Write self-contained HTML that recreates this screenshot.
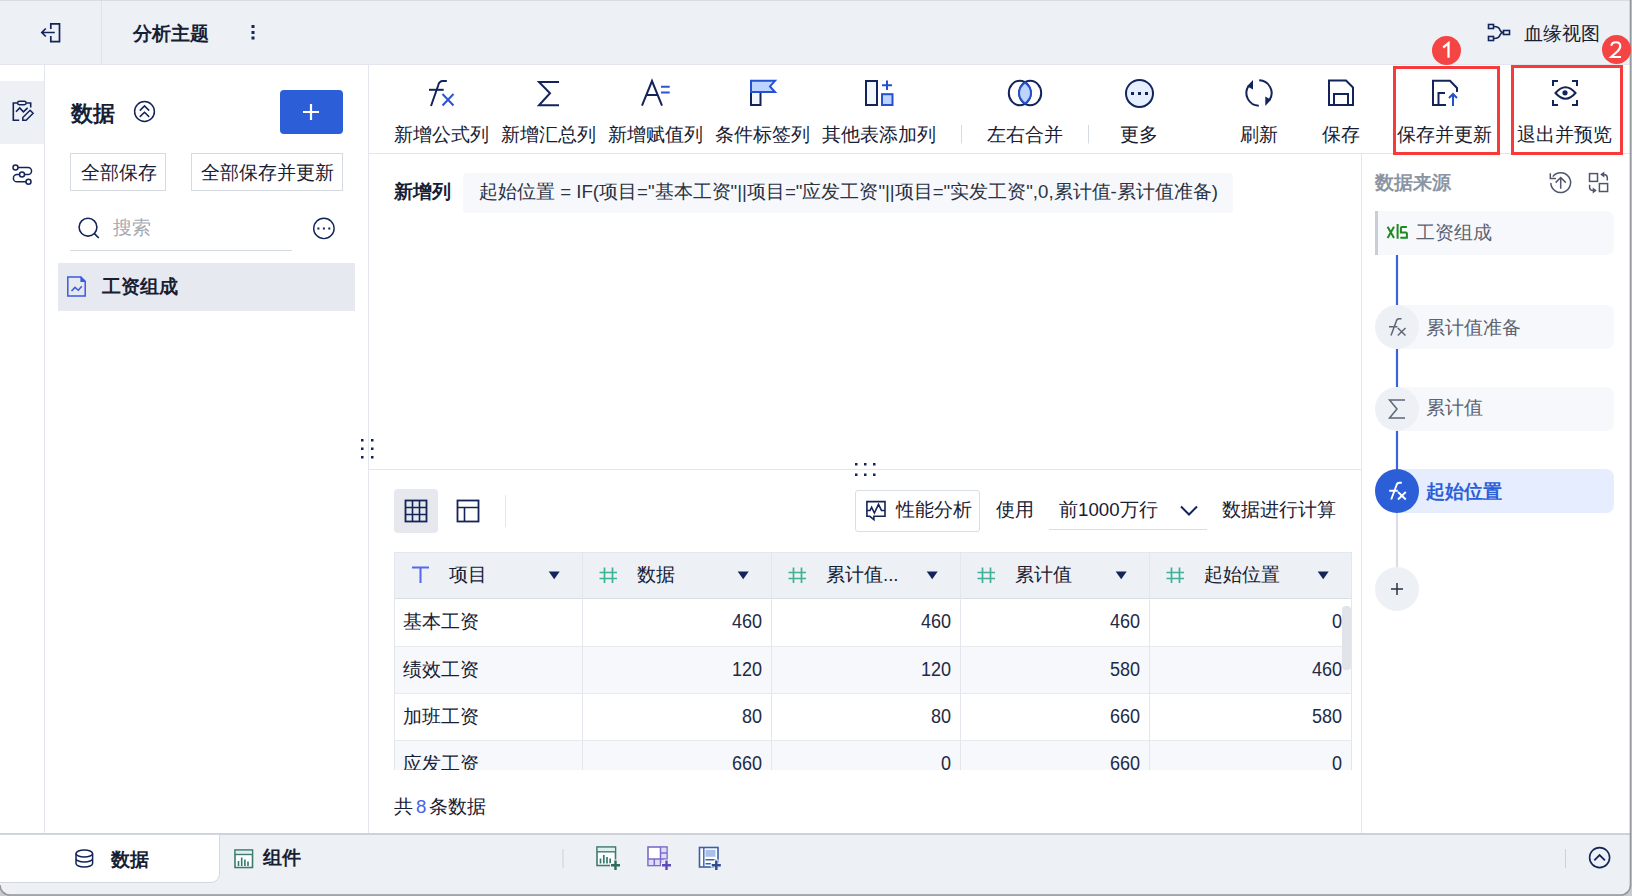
<!DOCTYPE html>
<html><head><meta charset="utf-8">
<style>
*{box-sizing:border-box;margin:0;padding:0}
html,body{width:1632px;height:896px;overflow:hidden;background:#fff}
body{position:relative;font-family:"Liberation Sans",sans-serif;font-size:18.67px;line-height:24px;color:#172033}
.a{position:absolute}
.t{position:absolute;white-space:nowrap;line-height:24px}
.b{font-weight:bold}
svg{position:absolute;overflow:visible}
.n{text-align:right;font-size:20px;transform:scaleX(.9);transform-origin:100% 50%;color:#1E2B45}
</style></head><body>

<!-- top bar -->
<div class="a" style="left:0;top:0;width:1632px;height:65px;background:#EDF0F5;border-top:1px solid #D9DCE1;border-bottom:1px solid #E3E6EC"></div>
<div class="a" style="left:101px;top:1px;width:1px;height:63px;background:#E0E3E9"></div>
<svg style="left:0;top:0" width="1632" height="65">
  <g fill="none" stroke="#12245A" stroke-width="2">
    <path d="M50.8 29 V23.8 H59.5 V41.6 H50.8 V36" stroke-width="1.7"/>
    <path d="M54.8 32.5 H41.8 M45.8 28.5 L41.8 32.5 L45.8 36.5" stroke-width="1.7"/>
  </g>
  <g fill="#12245A"><rect x="251.5" y="25" width="3" height="3"/><rect x="251.5" y="31" width="3" height="3"/><rect x="251.5" y="36.5" width="3" height="3"/></g>
  <g fill="none" stroke="#12245A" stroke-width="1.6">
    <rect x="1488.5" y="24.5" width="5" height="4"/><rect x="1488.5" y="36.5" width="5" height="4"/><rect x="1503.5" y="30.5" width="6" height="4"/>
    <path d="M1494 26.5 Q1499 26.5 1500 30 Q1501 32.5 1503.5 32.5 M1494 38.5 Q1499 38.5 1500 35 Q1501 32.5 1503.5 32.5"/>
  </g>
</svg>
<div class="t b" style="left:133px;top:22px">分析主题</div>
<div class="t" style="left:1524px;top:22px">血缘视图</div>

<!-- left rail -->
<div class="a" style="left:0;top:65px;width:45px;height:768px;background:#fff;border-right:1px solid #E3E6EC"></div>
<div class="a" style="left:0;top:81px;width:44px;height:63px;background:#EDF0F5"></div>
<svg style="left:0;top:0" width="45" height="200">
  <g fill="none" stroke="#12245A" stroke-width="1.8">
    <path d="M17.4 103 H13.3 V120.3 H19.2" stroke-width="1.6"/><path d="M26.2 103 H30.7 V107.5" stroke-width="1.6"/>
    <rect x="17.6" y="101.3" width="8.5" height="3.4" rx="1.7" stroke-width="1.5"/>
    <path d="M16 111.7 L19.7 108 L23.4 111.9 L27.7 107.8" stroke-width="1.6"/>
    <path d="M22.8 120.3 V117.5 L30.1 110.3 L33.1 113.3 L26.1 120.3 Z" stroke-width="1.5"/>
    <circle cx="15.5" cy="167.5" r="2.5" stroke-width="1.5"/><circle cx="22" cy="174.6" r="2.5" stroke-width="1.5"/><circle cx="28.5" cy="181.8" r="2.5" stroke-width="1.5"/>
    <path d="M18 167.5 H28 A3.55 3.55 0 0 1 28 174.6 H24.5 M19.5 174.6 H17 A3.6 3.6 0 0 0 17 181.8 H26" stroke-width="1.5"/>
  </g>
</svg>

<!-- left panel -->
<div class="a" style="left:368px;top:65px;width:1px;height:768px;background:#E3E6EC"></div>
<div class="t b" style="left:70.5px;top:100px;font-size:21.8px;line-height:28px">数据</div>
<svg style="left:0;top:0" width="370" height="330">
  <g fill="none" stroke="#12245A" stroke-width="1.6">
    <circle cx="144.5" cy="111.5" r="9.9" stroke-width="1.5"/>
    <path d="M139.8 110.6 L144.5 105.9 L149.2 110.6 M139.8 116.9 L144.5 112.2 L149.2 116.9" stroke-width="1.5"/>
  </g>
  <g fill="none" stroke="#12245A" stroke-width="2">
    <circle cx="88" cy="227.2" r="8.9" stroke-width="1.6"/><path d="M94.4 233.6 L98.8 238" stroke-width="1.7"/>
  </g>
  <g fill="none" stroke="#12245A" stroke-width="1.6">
    <circle cx="323.9" cy="228.4" r="10.2" stroke-width="1.4"/>
  </g>
  <g fill="#12245A"><rect x="317.4" y="227.5" width="2" height="2"/><rect x="322.9" y="227.5" width="2" height="2"/><rect x="328.3" y="227.5" width="2" height="2"/></g>
</svg>
<div class="a" style="left:280px;top:90px;width:63px;height:44px;background:#2C5ED8;border-radius:4px"></div>
<svg style="left:0;top:0" width="370" height="140"><path d="M311 104 V120 M303 112 H319" stroke="#fff" stroke-width="2.2"/></svg>
<div class="a" style="left:70px;top:153px;width:96px;height:38px;border:1px solid #D6DAE1"></div>
<div class="t" style="left:81px;top:161px">全部保存</div>
<div class="a" style="left:191px;top:153px;width:152px;height:38px;border:1px solid #D6DAE1"></div>
<div class="t" style="left:201px;top:161px">全部保存并更新</div>
<div class="t" style="left:113px;top:216px;color:#A4A9B2">搜索</div>
<div class="a" style="left:70px;top:250px;width:222px;height:1px;background:#D6DAE1"></div>
<div class="a" style="left:58px;top:263px;width:297px;height:48px;background:#E6E9F0"></div>
<svg style="left:0;top:0" width="370" height="330">
  <path d="M67.8 277.1 H80.9 L85.2 281.4 V295.9 H67.8 Z" fill="none" stroke="#3A5AE2" stroke-width="1.5"/>
  <path d="M80.4 276.4 L86 282 H80.4 Z" fill="#3A5AE2"/>
  <path d="M71.5 291 L75 287.4 L78.3 290.3 L81.8 286.3" fill="none" stroke="#3A5AE2" stroke-width="1.5"/>
</svg>
<div class="t b" style="left:102px;top:275px">工资组成</div>


<!-- center toolbar -->
<div class="a" style="left:369px;top:153px;width:1262px;height:1px;background:#E3E6EC"></div>
<div class="a" style="left:1361px;top:153px;width:1px;height:680px;background:#E3E6EC"></div>
<svg style="left:0;top:0" width="1632" height="160">
  <!-- fx -->
  <path d="M446.8 81 H443 Q439 81 438 86 L431 106" fill="none" stroke="#12245A" stroke-width="2"/>
  <path d="M429 89.8 H443.7" fill="none" stroke="#12245A" stroke-width="2"/>
  <path d="M442.5 94 L453.5 105.5 M453.5 94 L442.5 105.5" fill="none" stroke="#2C55D0" stroke-width="2"/>
  <!-- sigma -->
  <path d="M559 81.9 H539 L550 93.3 L539 105.3 H559" fill="none" stroke="#12245A" stroke-width="2"/>
  <!-- A= -->
  <path d="M642 105.6 L652 81 L662 105.6 M646 95 H658" fill="none" stroke="#12245A" stroke-width="2"/>
  <path d="M661 86.7 H669.7 M661 92.6 H669.7" fill="none" stroke="#2C55D0" stroke-width="2"/>
  <!-- flag -->
  <rect x="751" y="92" width="9.5" height="13" fill="#F3F7FF" stroke="#12245A" stroke-width="2"/>
  <path d="M751 80.8 H775 L770 86.4 L775 92 H751 Z" fill="#BCD4FF" stroke="#2550D0" stroke-width="2"/>
  <!-- col add -->
  <rect x="866" y="81" width="11" height="24" fill="#F3F8FF" stroke="#12245A" stroke-width="2"/>
  <rect x="882" y="94.2" width="10.5" height="10.8" fill="#BCD4FF" stroke="#2550D0" stroke-width="2"/>
  <path d="M887 80.5 V90 M882 85.2 H892" fill="none" stroke="#2550D0" stroke-width="2"/>
  <!-- merge -->
  <ellipse cx="1019.8" cy="93" rx="11" ry="12.3" fill="none" stroke="#12245A" stroke-width="2"/>
  <ellipse cx="1030.2" cy="93" rx="11" ry="12.3" fill="none" stroke="#12245A" stroke-width="2"/>
  <path d="M1025 82.5 Q1031 87 1031 93 Q1031 99 1025 103.5 Q1019 99 1019 93 Q1019 87 1025 82.5 Z" fill="#BCD4FF" stroke="#2550D0" stroke-width="2"/>
  <!-- more -->
  <circle cx="1139.5" cy="93.4" r="13.5" fill="#E6EFFF" stroke="#12245A" stroke-width="2"/>
  <g fill="#12245A"><rect x="1131" y="92" width="3" height="3"/><rect x="1138" y="92" width="3" height="3"/><rect x="1145" y="92" width="3" height="3"/></g>
  <!-- refresh -->
  <path d="M1258.8 105.7 A12.7 12.7 0 0 1 1248.5 86" fill="none" stroke="#12245A" stroke-width="2"/>
  <path d="M1259.2 80.3 A12.7 12.7 0 0 1 1269.5 100" fill="none" stroke="#12245A" stroke-width="2"/>
  <path d="M1253 80 L1253 89.5 L1247 86.2 Z" fill="#12245A"/>
  <path d="M1265.3 96.5 L1265.3 106 L1271 99.8 Z" fill="#12245A"/>
  <!-- save -->
  <path d="M1329 80.5 H1346 L1353 87.5 V105 H1329 Z" fill="none" stroke="#12245A" stroke-width="2"/>
  <path d="M1334 105 V94 H1348 V105" fill="none" stroke="#12245A" stroke-width="2"/>
  <!-- save update -->
  <path d="M1446 105 H1433 V80.8 H1450 L1457 88 V92" fill="none" stroke="#12245A" stroke-width="2"/>
  <path d="M1438.5 105 V93 H1445" fill="none" stroke="#12245A" stroke-width="2"/>
  <path d="M1453 106 V94 M1449 98 L1453 94 L1457 98" fill="none" stroke="#2550D0" stroke-width="2"/>
  <!-- eye -->
  <path d="M1553 86 V81 H1558 M1572 81 H1577 V86 M1577 100 V105 H1572 M1558 105 H1553 V100" fill="none" stroke="#12245A" stroke-width="2"/>
  <path d="M1555.5 93 Q1565.5 81.5 1575.5 93 Q1565.5 104.5 1555.5 93 Z" fill="none" stroke="#12245A" stroke-width="2"/>
  <circle cx="1565" cy="92.8" r="2.6" fill="#12245A"/>
  <!-- separators -->
  <path d="M961.5 125 V143.5 M1088.5 125 V143.5" stroke="#D6DAE1" stroke-width="1"/>
</svg>
<div class="t" style="left:394px;top:123px">新增公式列</div>
<div class="t" style="left:501px;top:123px">新增汇总列</div>
<div class="t" style="left:608px;top:123px">新增赋值列</div>
<div class="t" style="left:715px;top:123px">条件标签列</div>
<div class="t" style="left:822px;top:123px">其他表添加列</div>
<div class="t" style="left:987px;top:123px">左右合并</div>
<div class="t" style="left:1120px;top:123px">更多</div>
<div class="t" style="left:1240px;top:123px">刷新</div>
<div class="t" style="left:1322px;top:123px">保存</div>
<div class="t" style="left:1397px;top:123px">保存并更新</div>
<div class="t" style="left:1517px;top:123px">退出并预览</div>
<!-- red boxes -->
<div class="a" style="left:1393px;top:66px;width:107px;height:89px;border:3px solid #F83A3A"></div>
<div class="a" style="left:1511px;top:65px;width:112px;height:90px;border:3px solid #F83A3A"></div>
<div class="a" style="left:1432px;top:36px;width:29px;height:29px;border-radius:50%;background:#F44444"></div>
<svg style="left:0;top:0" width="1632" height="70"><path d="M1443.2 47.5 L1448.5 43.2 V57.8" fill="none" stroke="#fff" stroke-width="2.3"/></svg>


<!-- formula -->
<div class="t b" style="left:394px;top:180px">新增列</div>
<div class="a" style="left:463px;top:173px;width:770px;height:40px;background:#F7F8FB;border-radius:4px"></div>
<div class="t" style="left:479px;top:180px;color:#2A3243">起始位置 = IF(项目="基本工资"||项目="应发工资"||项目="实发工资",0,累计值-累计值准备)</div>

<!-- handles -->
<svg style="left:0;top:0" width="1632" height="500">
  <g fill="#12245A">
    <rect x="361" y="439" width="2.5" height="2.5"/><rect x="371" y="439" width="2.5" height="2.5"/>
    <rect x="361" y="447.5" width="2.5" height="2.5"/><rect x="371" y="447.5" width="2.5" height="2.5"/>
    <rect x="361" y="456" width="2.5" height="2.5"/><rect x="371" y="456" width="2.5" height="2.5"/>
    <rect x="855" y="463" width="2.5" height="2.5"/><rect x="864" y="463" width="2.5" height="2.5"/><rect x="873" y="463" width="2.5" height="2.5"/>
    <rect x="855" y="473.5" width="2.5" height="2.5"/><rect x="864" y="473.5" width="2.5" height="2.5"/><rect x="873" y="473.5" width="2.5" height="2.5"/>
  </g>
</svg>
<div class="a" style="left:369px;top:469px;width:992px;height:1px;background:#E3E6EC"></div>


<!-- table toolbar -->
<div class="a" style="left:394px;top:489px;width:44px;height:44px;background:#E6E8EE;border-radius:4px"></div>
<svg style="left:0;top:0" width="1632" height="560">
  <rect x="405.5" y="500.5" width="21" height="21" fill="#E6E8EE" stroke="#12245A" stroke-width="1.8"/>
  <path d="M412.5 500.5 V521.5 M419.5 500.5 V521.5 M405.5 507.5 H426.5 M405.5 514.5 H426.5" stroke="#12245A" stroke-width="1.6" fill="none"/>
  <rect x="457.5" y="500.5" width="21" height="21" fill="none" stroke="#12245A" stroke-width="1.8"/>
  <path d="M457.5 507.5 H478.5 M464.5 507.5 V521.5" stroke="#12245A" stroke-width="1.6" fill="none"/>
  <path d="M505.5 495 V527" stroke="#E3E6EC" stroke-width="1"/>
  <path d="M866.9 501.6 H885 V516.3 H873.9 V519.6 L869.8 516.3 H866.9 Z" fill="none" stroke="#12245A" stroke-width="1.6"/>
  <path d="M866.9 510.5 H870 L871.6 507.3 L874.4 513 L878.5 504.3 L881.5 510.5 H885" fill="none" stroke="#12245A" stroke-width="1.6"/>
  <path d="M1181 506.5 L1189 514.5 L1197 506.5" fill="none" stroke="#12245A" stroke-width="2"/>
</svg>
<div class="a" style="left:855px;top:490px;width:125px;height:42px;border:1px solid #D9DDE4;border-radius:3px"></div>
<div class="t" style="left:896px;top:498px">性能分析</div>
<div class="t" style="left:996px;top:498px">使用</div>
<div class="t" style="left:1059px;top:498px">前1000万行</div>
<div class="a" style="left:1049px;top:529px;width:158px;height:1px;background:#D9DDE4"></div>
<div class="t" style="left:1222px;top:498px">数据进行计算</div>

<!-- table -->
<div class="a" style="left:394px;top:552px;width:958px;height:218px;overflow:hidden">
<div class="a" style="left:0;top:0;width:957px;height:47px;background:#EDF0F5;border-top:1px solid #E3E6EC;border-bottom:1px solid #D9DDE4"></div>
<div class="a" style="left:0;top:47px;width:957px;height:48px;background:#FFFFFF;border-bottom:1px solid #E6E9EE"></div>
<div class="a" style="left:0;top:95px;width:957px;height:47px;background:#F7F8FB;border-bottom:1px solid #E6E9EE"></div>
<div class="a" style="left:0;top:142px;width:957px;height:47px;background:#FFFFFF;border-bottom:1px solid #E6E9EE"></div>
<div class="a" style="left:0;top:189px;width:957px;height:47px;background:#F7F8FB;border-bottom:1px solid #E6E9EE"></div>
<div class="a" style="left:188px;top:0;width:1px;height:218px;background:#E3E6EC"></div>
<div class="a" style="left:377px;top:0;width:1px;height:218px;background:#E3E6EC"></div>
<div class="a" style="left:566px;top:0;width:1px;height:218px;background:#E3E6EC"></div>
<div class="a" style="left:755px;top:0;width:1px;height:218px;background:#E3E6EC"></div>
<div class="a" style="left:0;top:0;width:1px;height:218px;background:#E3E6EC"></div>
<div class="a" style="left:957px;top:0;width:1px;height:218px;background:#E3E6EC"></div>
<svg style="left:0;top:0" width="957" height="50">
<path d="M18 15.5 H35 M26.5 15.5 V31" stroke="#5468E8" stroke-width="2" fill="none"/>
<path d="M154.7 19.5 H165.7 L160.2 27.3 Z" fill="#12245A"/>
<path d="M210.5 15.5 V31 M218.5 15.5 V31 M205.5 20.5 H223 M205.5 26.5 H223" stroke="#41B097" stroke-width="1.7" fill="none"/>
<path d="M343.7 19.5 H354.7 L349.2 27.3 Z" fill="#12245A"/>
<path d="M399.5 15.5 V31 M407.5 15.5 V31 M394.5 20.5 H412 M394.5 26.5 H412" stroke="#41B097" stroke-width="1.7" fill="none"/>
<path d="M532.7 19.5 H543.7 L538.2 27.3 Z" fill="#12245A"/>
<path d="M588.5 15.5 V31 M596.5 15.5 V31 M583.5 20.5 H601 M583.5 26.5 H601" stroke="#41B097" stroke-width="1.7" fill="none"/>
<path d="M721.7 19.5 H732.7 L727.2 27.3 Z" fill="#12245A"/>
<path d="M777.5 15.5 V31 M785.5 15.5 V31 M772.5 20.5 H790 M772.5 26.5 H790" stroke="#41B097" stroke-width="1.7" fill="none"/>
<path d="M923.7 19.5 H934.7 L929.2 27.3 Z" fill="#12245A"/>
</svg>
<div class="t" style="left:55px;top:11px">项目</div>
<div class="t" style="left:243px;top:11px">数据</div>
<div class="t" style="left:432px;top:11px">累计值...</div>
<div class="t" style="left:621px;top:11px">累计值</div>
<div class="t" style="left:810px;top:11px">起始位置</div>
<div class="t" style="left:9px;top:58px">基本工资</div>
<div class="t n" style="left:188px;top:57px;width:180px">460</div>
<div class="t n" style="left:377px;top:57px;width:180px">460</div>
<div class="t n" style="left:566px;top:57px;width:180px">460</div>
<div class="t n" style="left:755px;top:57px;width:193px">0</div>
<div class="t" style="left:9px;top:106px">绩效工资</div>
<div class="t n" style="left:188px;top:105px;width:180px">120</div>
<div class="t n" style="left:377px;top:105px;width:180px">120</div>
<div class="t n" style="left:566px;top:105px;width:180px">580</div>
<div class="t n" style="left:755px;top:105px;width:193px">460</div>
<div class="t" style="left:9px;top:153px">加班工资</div>
<div class="t n" style="left:188px;top:152px;width:180px">80</div>
<div class="t n" style="left:377px;top:152px;width:180px">80</div>
<div class="t n" style="left:566px;top:152px;width:180px">660</div>
<div class="t n" style="left:755px;top:152px;width:193px">580</div>
<div class="t" style="left:9px;top:200px">应发工资</div>
<div class="t n" style="left:188px;top:199px;width:180px">660</div>
<div class="t n" style="left:377px;top:199px;width:180px">0</div>
<div class="t n" style="left:566px;top:199px;width:180px">660</div>
<div class="t n" style="left:755px;top:199px;width:193px">0</div>
<div class="a" style="left:948px;top:54px;width:9px;height:64px;background:#E1E3E8;border-radius:4px"></div>
</div>

<div class="t" style="left:394px;top:795px">共<span style="color:#4A62E8;margin:0 3px">8</span>条数据</div>

<!-- right panel -->
<div class="t b" style="left:1375px;top:171px;color:#8C95A3">数据来源</div>
<svg style="left:0;top:0" width="1632" height="620">
  <g fill="none" stroke="#4D5769" stroke-width="1.5">
    <path d="M1550.8 183 A9.9 9.9 0 1 0 1552.8 176.6"/>
    <path d="M1550.3 173.3 V178.5 H1556"/>
    <path d="M1560.7 188.8 V177.5 M1555.6 182.6 L1560.7 177.5 L1565.8 182.6"/>
    <rect x="1589.5" y="173.6" width="8" height="7.8"/><rect x="1599.4" y="183.6" width="8.2" height="7.9"/>
    <path d="M1607.3 180.5 V178 Q1607.3 174.6 1603.5 174.6 H1602.5"/>
    <path d="M1589.6 184.8 V187.2 Q1589.6 190.5 1593.5 190.5 H1594.5"/>
  </g>
  <path d="M1600.2 174.6 L1604.3 171.6 V177.6 Z M1596.8 190.5 L1592.7 187.5 V193.5 Z" fill="#4D5769"/>
  <!-- timeline -->
  <path d="M1397 255 V305 M1397 349 V387 M1397 431 V469" stroke="#3A63DA" stroke-width="2.2"/>
  <path d="M1397 513 V567" stroke="#DADDE3" stroke-width="2.2"/>
</svg>
<div class="a" style="left:1375px;top:211px;width:239px;height:44px;background:#F7F8FB;border-radius:0 8px 8px 0;border-left:3px solid #C9CDD5"></div>
<svg style="left:0;top:0" width="1632" height="260"><path d="M1387.6 226.8 L1394 238 M1394 226.8 L1387.6 238 M1397.6 224 V238.7" fill="none" stroke="#1F8A22" stroke-width="2"/><path d="M1406.9 227.1 H1402 Q1400.9 227.1 1400.9 228.3 V232.6 H1405.8 Q1406.9 232.6 1406.9 233.7 V237.7 H1400.3" fill="none" stroke="#1F8A22" stroke-width="2"/></svg>
<div class="t" style="left:1416px;top:221px;color:#5B6372">工资组成</div>

<div class="a" style="left:1397px;top:305px;width:217px;height:44px;background:#F7F8FB;border-radius:0 8px 8px 0"></div>
<div class="a" style="left:1375px;top:305px;width:44px;height:44px;background:#EDF0F4;border-radius:50%"></div>
<div class="t" style="left:1426px;top:316px;color:#5B6372">累计值准备</div>

<div class="a" style="left:1397px;top:387px;width:217px;height:44px;background:#F7F8FB;border-radius:0 8px 8px 0"></div>
<div class="a" style="left:1375px;top:387px;width:44px;height:44px;background:#EDF0F4;border-radius:50%"></div>
<div class="t" style="left:1426px;top:396px;color:#5B6372">累计值</div>

<div class="a" style="left:1397px;top:469px;width:217px;height:44px;background:#E5EDFF;border-radius:0 8px 8px 0"></div>
<div class="a" style="left:1375px;top:469px;width:44px;height:44px;background:#2C5ED8;border-radius:50%"></div>
<div class="t b" style="left:1426px;top:480px;color:#2C5ED8">起始位置</div>

<div class="a" style="left:1375px;top:567px;width:44px;height:44px;background:#EDF0F4;border-radius:50%"></div>
<svg style="left:0;top:0" width="1632" height="620">
  <path d="M1401.5 318.8 H1399.2 Q1396.8 318.8 1396.2 321.5 L1391 335.5 M1389 326.8 H1397.5" fill="none" stroke="#5D6677" stroke-width="1.5"/>
  <path d="M1397.8 328 L1405.5 335.5 M1405.5 328 L1397.8 335.5" fill="none" stroke="#5D6677" stroke-width="1.5"/>
  <path d="M1405 400 H1389.5 L1397 409 L1389.5 418 H1405" fill="none" stroke="#5D6677" stroke-width="1.5"/>
  <path d="M1401.8 482.8 H1399.5 Q1397 482.8 1396.4 485.5 L1391.2 499.5 M1389.2 490.8 H1397.8" fill="none" stroke="#fff" stroke-width="1.9"/>
  <path d="M1398 492 L1405.8 499.5 M1405.8 492 L1398 499.5" fill="none" stroke="#fff" stroke-width="1.9"/>
  <path d="M1397 583 V595 M1391 589 H1403" stroke="#2A3243" stroke-width="1.5"/>
</svg>

<!-- bottom bar -->
<div class="a" style="left:0;top:833px;width:1632px;height:63px;background:#EDF0F5;border-top:2px solid #CDD2DA"></div>
<div class="a" style="left:0;top:834px;width:220px;height:49px;background:#fff;border-right:1px solid #D3D8E0;border-bottom:1px solid #D3D8E0;border-top:1px solid #D3D8E0;border-radius:0 0 9px 0"></div>
<svg style="left:0;top:0" width="1632" height="896">
  <g fill="none" stroke="#12245A" stroke-width="1.5">
    <ellipse cx="84.3" cy="853.5" rx="8.3" ry="3.6"/>
    <path d="M76 853.5 V863.5 A8.3 3.6 0 0 0 92.6 863.5 V853.5 M76 858.5 A8.3 3.6 0 0 0 92.6 858.5"/>
  </g>
  <rect x="235" y="850" width="17.5" height="17.5" fill="#fff" stroke="#3F7A72" stroke-width="1.6"/>
  <rect x="235.8" y="850.8" width="16" height="3.5" fill="#DDF2EE"/>
  <path d="M235 854.5 H252.5" stroke="#3F7A72" stroke-width="1.4"/>
  <path d="M238.5 866 V861 M241.7 866 V857.5 M244.9 866 V859.5 M248 866 V861.5" stroke="#2F7A6E" stroke-width="1.6"/>
  <path d="M563 849 V868 M1565.5 849 V868" stroke="#CDD2DA" stroke-width="1"/>
  <!-- icon1 -->
  <rect x="597" y="847" width="18.5" height="18.5" fill="#fff" stroke="#3F7A72" stroke-width="1.6"/>
  <rect x="597.8" y="847.8" width="17" height="3.6" fill="#DDF2EE"/>
  <path d="M597 851.8 H615.5" stroke="#3F7A72" stroke-width="1.4"/>
  <path d="M600.5 863.5 V858.5 M603.8 863.5 V855 M607 863.5 V857 M610.2 863.5 V858.5" stroke="#2F7A6E" stroke-width="1.7"/>
  <path d="M615.5 859.5 V871 M610 865.2 H621" stroke="#EDF0F5" stroke-width="4.5"/>
  <path d="M615.5 860.5 V870 M611 865.2 H620" stroke="#2F6B60" stroke-width="2.4"/>
  <!-- icon2 -->
  <rect x="648" y="847" width="19" height="18.5" fill="#fff" stroke="#7A6CCB" stroke-width="1.6"/>
  <rect x="660.5" y="847.8" width="5.8" height="12.5" fill="#E2DDF7"/>
  <rect x="648.8" y="859" width="17.5" height="5.8" fill="#E2DDF7"/>
  <path d="M648 859 H667 M660.5 847 V865.5 M660.5 853 H667 M654.3 859 V865.5" stroke="#7A6CCB" stroke-width="1.5" fill="none"/>
  <path d="M666.5 859.5 V871 M661 865.2 H672" stroke="#EDF0F5" stroke-width="4.5"/>
  <path d="M666.5 860.5 V870 M662 865.2 H671" stroke="#5B4CB8" stroke-width="2.4"/>
  <!-- icon3 -->
  <rect x="699.5" y="847.5" width="18.5" height="19.5" fill="#fff" stroke="#3A5EAE" stroke-width="1.6"/>
  <path d="M703.8 848 V866.5" stroke="#3A5EAE" stroke-width="1.4"/>
  <rect x="705.5" y="849.8" width="10" height="7" fill="#A9C1E6"/>
  <path d="M705.5 859.7 H715.5 M705.5 863.8 H711" stroke="#3A5EAE" stroke-width="1.6"/>
  <path d="M716.3 859.5 V871 M710.8 865.2 H721.8" stroke="#EDF0F5" stroke-width="4.5"/>
  <path d="M716.3 860.5 V870 M711.8 865.2 H720.8" stroke="#2F4A8E" stroke-width="2.4"/>
  <!-- collapse -->
  <circle cx="1599.6" cy="857.6" r="10" fill="none" stroke="#12245A" stroke-width="1.6"/>
  <path d="M1594.3 860.3 L1599.6 855 L1604.9 860.3" fill="none" stroke="#12245A" stroke-width="1.8"/>
</svg>
<div class="t b" style="left:110.5px;top:848px">数据</div>
<div class="t b" style="left:262.5px;top:846px">组件</div>

<!-- window frame -->
<svg style="left:0;top:0" width="1632" height="896">
  <path fill-rule="evenodd" fill="#C9CBCF" d="M0 0 H1632 V896 H0 Z M-20 -20 H1620.5 A10 10 0 0 1 1630.5 -10 V885 A10 10 0 0 1 1620.5 895 H10 A10 10 0 0 1 0 885 Z"/>
  <path fill="none" stroke="#94979C" stroke-width="1.6" d="M1630.5 0 V885 A10 10 0 0 1 1620.5 895 H10 A10 10 0 0 1 0 885"/>
</svg>

<div class="a" style="left:1602px;top:35px;width:29px;height:29px;border-radius:50%;background:#F44444"></div>
<svg style="left:0;top:0" width="1632" height="70"><path d="M1611.3 45.8 Q1611.8 42.3 1615.8 42.3 Q1620.3 42.3 1620.3 46.3 Q1620.3 48.8 1617 51.8 L1611.2 57 H1621" fill="none" stroke="#fff" stroke-width="2.1"/></svg>
</body></html>
